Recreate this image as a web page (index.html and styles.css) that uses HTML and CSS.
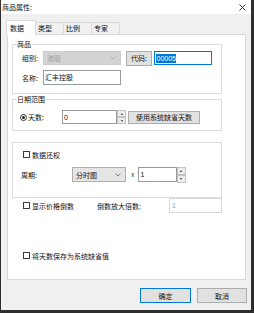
FILE: index.html
```html
<!DOCTYPE html>
<html lang="zh-CN">
<head>
<meta charset="utf-8">
<title>商品属性</title>
<link rel="stylesheet" href="styles.css">
</head>
<body>
<div class="win">
  <div class="titlebar">
    <span class="title">商品属性:</span>
    <svg class="close" width="7" height="7" viewBox="0 0 7 7"><path d="M0.5 0.5L6.5 6.5M6.5 0.5L0.5 6.5" stroke="#222" stroke-width="0.9" fill="none"/></svg>
  </div>
  <div class="tabs">
    <div class="tab active">数据</div>
    <div class="tab">类型</div>
    <div class="tab">比例</div>
    <div class="tab">专家</div>
  </div>
  <div class="panel">
    <fieldset class="group g1">
      <legend>商品</legend>
      <div class="row r1">
        <span class="lbl w21">组别:</span>
        <div class="combo disabled w78"><span>港股</span><svg class="chev" width="6" height="4" viewBox="0 0 6 4"><polyline points="0.5,0.5 3,3 5.5,0.5" fill="none" stroke="#b0b0b0" stroke-width="0.8"/></svg></div>
        <div class="btn codebtn">代码:</div>
        <div class="input focus w58"><span class="sel num">00005</span></div>
      </div>
      <div class="row r2">
        <span class="lbl w21">名称:</span>
        <div class="input w78 h15">汇丰控股</div>
      </div>
    </fieldset>
    <fieldset class="group g2">
      <legend>日期范围</legend>
      <div class="row r3">
        <span class="radiolbl"><span class="radio"><span class="dot"></span></span>天数:</span>
        <div class="input w55 num">0</div>
        <div class="spin"><div class="up"><i></i></div><div class="down"><i></i></div></div>
        <div class="btn defbtn">使用系统缺省天数</div>
      </div>
    </fieldset>
    <div class="group g3">
      <div class="row ra">
        <span class="check"></span><span>数据还权</span>
      </div>
      <div class="row rb">
        <span class="lbl w51">周期:</span>
        <div class="combo w54"><span>分时图</span><svg class="chev" width="6" height="4" viewBox="0 0 6 4"><polyline points="0.5,0.5 3,3 5.5,0.5" fill="none" stroke="#666" stroke-width="0.8"/></svg></div>
        <span class="times num">x</span>
        <div class="input w39 num pad2">1</div>
        <div class="spin tall"><div class="up"><i></i></div><div class="down"><i></i></div></div>
      </div>
    </div>
    <div class="row r4">
      <span class="checklbl w74"><span class="check"></span><span>显示价格倒数</span></span>
      <span class="lbl w72">倒数放大倍数:</span>
      <div class="input dis w53 num pad2">1</div>
    </div>
    <div class="row r5">
      <span class="check"></span><span>将天数保存为系统缺省值</span>
    </div>
  </div>
  <div class="footer">
    <div class="btn okbtn">确定</div>
    <div class="btn cancelbtn">取消</div>
  </div>
</div>
</body>
</html>
```

FILE: styles.css
```css
* { box-sizing: border-box; }
html, body { margin: 0; padding: 0; }
body {
  width: 254px;
  height: 313px;
  background: #2e2e2e;
  font-family: "Noto Sans CJK SC", "Noto Sans", sans-serif;
  font-size: 7px;
  color: #111;
  overflow: hidden;
}
.num { font-family: "Liberation Sans", "Noto Sans", sans-serif; }
.win {
  margin-left: 1px;
  width: 250px;
  height: 310px;
  background: #f0f0f0;
  display: flex;
  flex-direction: column;
}
.titlebar {
  height: 14px;
  background: #fff;
  display: flex;
  align-items: center;
  padding-left: 1px;
  padding-right: 5px;
}
.title { line-height: 14px; }
.close { margin-left: auto; }

.tabs {
  margin-top: 6px;
  height: 14px;
  padding-left: 5px;
  display: flex;
  align-items: flex-end;
  position: relative;
  z-index: 1;
}
.tab {
  width: 29px;
  height: 12px;
  margin-left: -1px;
  border: 1px solid #d9d9d9;
  border-bottom: none;
  background: #f0f0f0;
  padding-left: 2px;
  line-height: 11px;
}
.tab.active {
  width: 30px;
  height: 15px;
  margin-left: 0;
  margin-bottom: -1px;
  background: #fff;
  padding-left: 3px;
  line-height: 15px;
  position: relative;
  z-index: 2;
}
.panel {
  margin-left: 6px;
  width: 239px;
  height: 246px;
  background: #fff;
  border: 1px solid #d9d9d9;
}
.group {
  margin: 0 0 0 4px;
  width: 210px;
  min-width: 0;
  border: 1px solid #dcdcdc;
}
fieldset.group legend {
  padding: 0 1px;
  margin-left: 3px;
  height: 9px;
  line-height: 9px;
}
.g1 { margin-top: 5px; padding: 2px 0 8px 0; }
.g1 .row { margin-left: 9px; }
.g2 { margin-top: 1px; padding: 6px 0 6px 0; }
.g3 { margin-top: 11px; padding: 7px 0 15px 0; }

.row { display: flex; align-items: center; }
.r1 { height: 14px; }
.r2 { height: 15px; margin-top: 5px; }
.r3 { height: 14px; margin-left: 7px; }
.ra { height: 9px; margin-left: 10px; }
.rb { height: 15px; margin-top: 8px; margin-left: 8px; }
.r4 { height: 15px; margin-left: 15px; }
.r5 { height: 9px; margin-top: 38px; margin-left: 15px; }

.lbl { flex: none; }
.w21 { width: 21px; }
.w51 { width: 51px; }
.w72 { width: 72px; }
.w74 { width: 74px; }
.w78 { width: 78px; }
.w58 { width: 58px; }
.w55 { width: 55px; }
.w54 { width: 54px; }
.w53 { width: 53px; }
.w39 { width: 39px; }

.combo {
  height: 14px;
  display: flex;
  align-items: center;
  justify-content: space-between;
  padding: 0 4px 0 3px;
  background: #e5e5e5;
  border: 1px solid #adadad;
  flex: none;
}
.rb .combo { height: 15px; }
.combo.disabled {
  background: #d3d3d3;
  border-color: #cccccc;
  color: #a3a3a3;
}
.input {
  height: 14px;
  border: 1px solid #9a9a9a;
  background: #fff;
  padding-left: 1px;
  display: flex;
  align-items: center;
  flex: none;
  line-height: 9px;
}
.h15 { height: 15px; }
.rb .input { height: 15px; }
.r4 .input { height: 15px; }
.pad2 { padding-left: 2px; }
.input.focus { border-color: #0078d7; margin-left: 2px; }
.input.dis { border-color: #d9d9d9; color: #9d9d9d; }
.sel { background: #0078d7; color: #fff; padding: 0 0.5px; line-height: 9px; }

.btn {
  display: flex;
  align-items: center;
  justify-content: center;
  background: #e1e1e1;
  border: 1px solid #adadad;
  flex: none;
}
.codebtn { width: 26px; height: 15px; margin-left: 5px; }
.defbtn { width: 72px; height: 13px; margin-left: 2px; }

.spin {
  width: 9px;
  height: 14px;
  display: flex;
  flex-direction: column;
  justify-content: space-between;
  flex: none;
}
.spin.tall { height: 16px; }
.spin .up, .spin .down {
  height: 7px;
  background: #ececec;
  border: 1px solid #c4c4c4;
  display: flex;
  align-items: center;
  justify-content: center;
}
.spin.tall .up, .spin.tall .down { height: 8px; }
.spin .up i {
  width: 0; height: 0;
  border-left: 1.5px solid transparent;
  border-right: 1.5px solid transparent;
  border-bottom: 2px solid #333;
}
.spin .down i {
  width: 0; height: 0;
  border-left: 1.5px solid transparent;
  border-right: 1.5px solid transparent;
  border-top: 2px solid #333;
}

.radiolbl { width: 42px; display: flex; align-items: center; flex: none; }
.radio {
  width: 7px; height: 7px;
  border: 1px solid #333;
  border-radius: 50%;
  display: flex;
  align-items: center;
  justify-content: center;
  margin-right: 1px;
  background: #fff;
}
.radio .dot { width: 3px; height: 3px; border-radius: 50%; background: #222; }

.check {
  width: 7px; height: 7px;
  border: 1px solid #3a3a3a;
  background: #fff;
  margin-right: 2px;
  flex: none;
}
.checklbl { display: flex; align-items: center; flex: none; }

.times { margin-left: 5px; margin-right: 3px; color: #444; line-height: 9px; }

.footer {
  margin-top: 8px;
  display: flex;
  justify-content: flex-end;
  padding-right: 4px;
}
.okbtn { width: 51px; height: 15px; border-color: #0078d7; }
.cancelbtn { width: 50px; height: 15px; margin-left: 6px; }
```
